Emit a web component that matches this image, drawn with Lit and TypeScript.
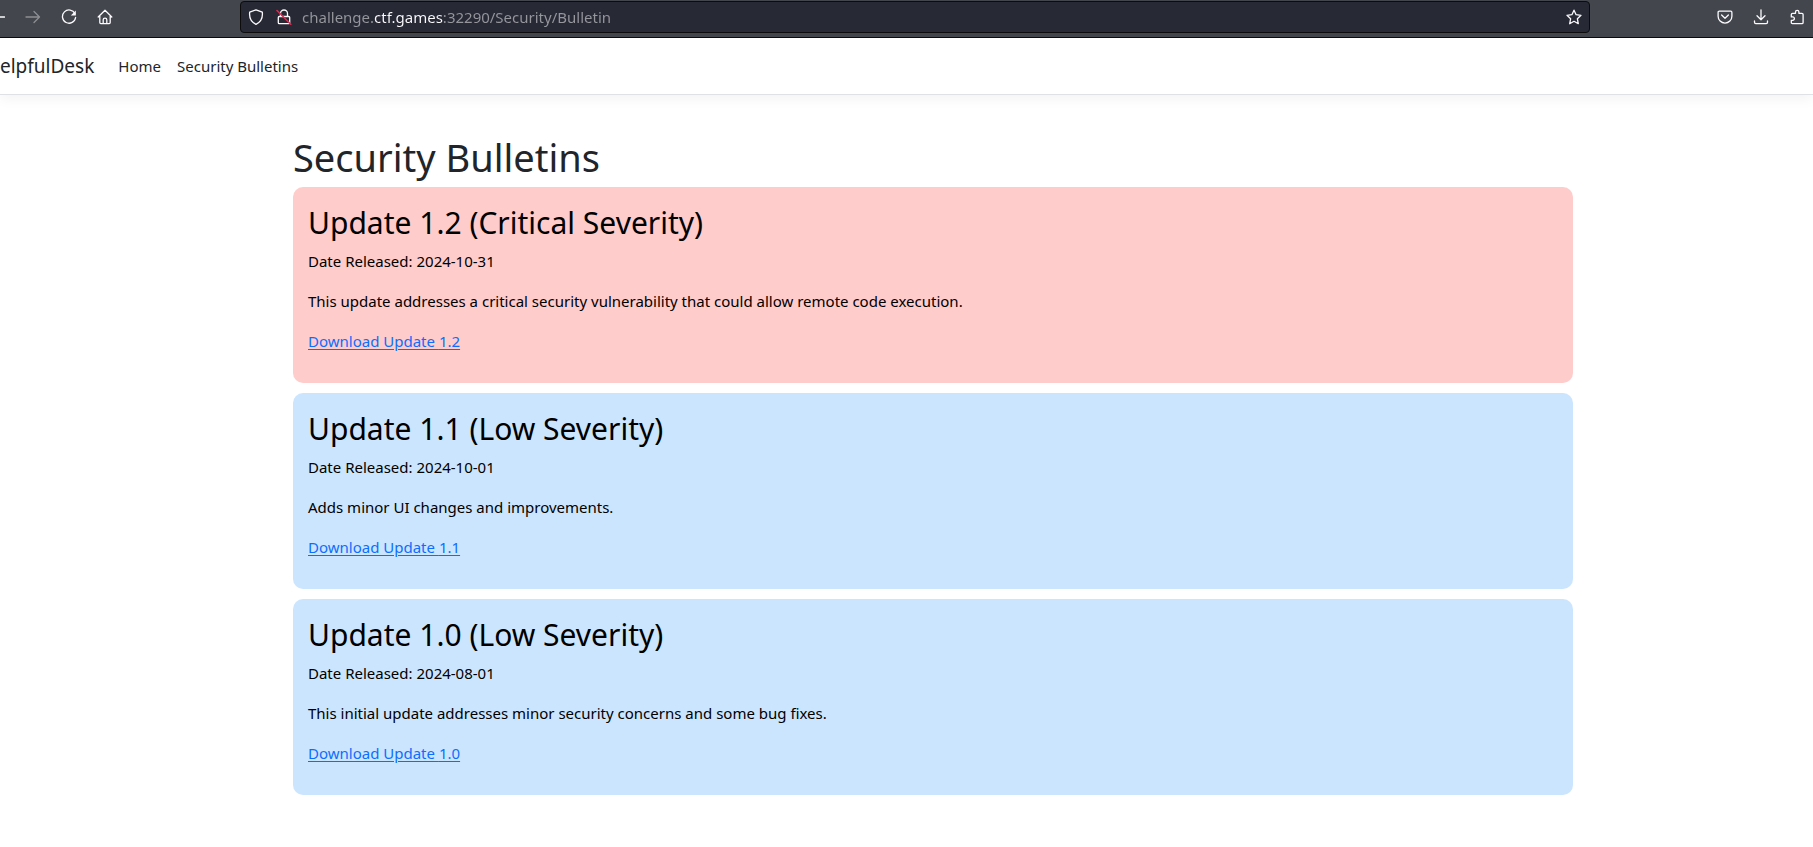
import { LitElement, html, css, svg } from "lit";
import { customElement, property } from "lit/decorators.js";

const icons = {
  back: svg`<path d="M15.5 8H2M7.5 2.5 2 8l5.500 5.500" />`,
  forward: svg`<path d="M1 8h13.500M9 2.500 14.500 8 9 13.500" />`,
  reload: svg`<path d="M14 4.700A6.600 6.600 0 1 0 14.600 8.500" /><path d="M14.800 1.600v5h-5z" fill="currentColor" stroke="none" />`,
  home: svg`<path d="M1.200 8 8 1.300 14.800 8M2.800 7v6.600q0 1 1 1h8.400q1 0 1-1V7M6.200 14.500V10.800q0-1.600 1.800-1.600t1.800 1.600v3.700" />`,
  shield: svg`<path d="M8 .8 14.300 3.200C14.900 8.200 12.800 13 8 15.300 3.200 13 1.100 8.200 1.700 3.200z" />`,
  lock: svg`<path d="M4.500 7.500V4.500a3.500 3.500 0 0 1 7 0v3M3.300 7.500h9.400q1 0 1 1v5.200q0 1-1 1H3.300q-1 0-1-1V8.500q0-1 1-1z" /><path d="M1 1.500 14.800 15.300" stroke="#e22850" stroke-width="1.500" />`,
  star: svg`<path d="m8 1.200 2.100 4.500 4.900.6-3.600 3.500.9 4.900L8 12.300l-4.300 2.400.9-4.900L1 6.300l4.900-.6z" />`,
  pocket: svg`<path d="M2.300 2.200h11.400q1.200 0 1.200 1.200v3.800a6.900 6.900 0 0 1-13.800 0V3.400q0-1.200 1.200-1.200z" /><path d="m4.600 6 3.400 3.200L11.400 6" />`,
  download: svg`<path d="M8 .8v9.700M4 6.700l4 4 4-4M1.500 12v1.300q0 1.300 1.300 1.300h10.400q1.300 0 1.300-1.300V12" />`,
  puzzle: svg`<path d="M2.300 5.500q0-1.200 1.200-1.200h3V3a1.700 1.700 0 0 1 3.400 0v1.300h3q1.200 0 1.200 1.200v8q0 1.200-1.200 1.200H3.500q-1.200 0-1.200-1.200v-2.200h1.400a1.700 1.700 0 0 0 0-3.400H2.300z" />`,
};

const icon = (name: keyof typeof icons) => html`<svg
  width="16" height="16" viewBox="0 0 16 16" fill="none" stroke="currentColor"
  stroke-width="1.300" stroke-linejoin="round" stroke-linecap="round" aria-hidden="true"
>${icons[name]}</svg>`;

@customElement("browser-toolbar")
class BrowserToolbar extends LitElement {
  static styles = css`
    :host {
      display: grid;
      grid-template-columns: 240px minmax(0, 1fr) 223px;
      box-sizing: border-box;
      height: 38px;
      padding: 1px 0 4px;
      overflow: hidden;
      background: #43464d;
      border-bottom: 1px solid #0c0c0d;
      color: #fbfbfe;
    }
    .group { display: flex; align-items: center; }
    .start { margin-left: -21px; }
    .end { justify-content: flex-end; margin-right: -2px; }
    button {
      display: grid;
      place-items: center;
      width: 36px;
      height: 32px;
      padding: 0;
      border: 0;
      background: none;
      color: inherit;
    }
    button:disabled { opacity: 0.4; }
    .address {
      display: flex;
      align-items: center;
      box-sizing: border-box;
      height: 32px;
      background: #272935;
      border: 1px solid #0c0c0d;
      border-radius: 4px;
      padding: 0 1px;
    }
    .address button { width: 28px; }
    .url {
      flex: 1;
      min-width: 0;
      padding: 0;
      margin: 0 0 0 4px;
      height: 30px;
      border: 0;
      outline: 0;
      font: 15px/30px "Noto Sans", sans-serif;
      color: transparent;
      background: linear-gradient(90deg, #96979d 71px, #fbfbfe 71px 141px, #96979d 141px);
      -webkit-background-clip: text;
      background-clip: text;
    }
  `;
  render() {
    return html`
      <div class="group start">
        <button aria-label="Back">${icon("back")}</button>
        <button aria-label="Forward" disabled>${icon("forward")}</button>
        <button aria-label="Reload">${icon("reload")}</button>
        <button aria-label="Home">${icon("home")}</button>
      </div>
      <div class="address">
        <button aria-label="Tracking protection">${icon("shield")}</button>
        <button aria-label="Connection not secure">${icon("lock")}</button>
        <input class="url" aria-label="Address" value="challenge.ctf.games:32290/Security/Bulletin" />
        <button aria-label="Bookmark">${icon("star")}</button>
      </div>
      <div class="group end">
        <button aria-label="Pocket">${icon("pocket")}</button>
        <button aria-label="Downloads">${icon("download")}</button>
        <button aria-label="Extensions">${icon("puzzle")}</button>
      </div>
    `;
  }
}

@customElement("bulletin-card")
class BulletinCard extends LitElement {
  @property() version = "";
  @property() severity = "";
  @property() released = "";
  @property() summary = "";

  static styles = css`
    :host { display: block; }
    .card {
      padding: 17px 15px 14px;
      border-radius: 10px;
      background: #cce5ff;
      color: #000;
    }
    .critical { background: #ffcccc; }
    h2 { margin: 0 0 7px; font-size: 30px; font-weight: 400; line-height: 38px; }
    p { margin: 0 0 16px; }
    a { color: #0d6efd; text-underline-offset: 2px; }
  `;
  render() {
    return html`
      <article class="card ${this.severity.toLowerCase()}">
        <h2>Update ${this.version} (${this.severity} Severity)</h2>
        <p>Date Released: ${this.released}</p>
        <p>${this.summary}</p>
        <p><a href="#update-${this.version}">Download Update ${this.version}</a></p>
      </article>
    `;
  }
}

const bulletins = [
  { version: "1.2", severity: "Critical", released: "2024-10-31", summary: "This update addresses a critical security vulnerability that could allow remote code execution." },
  { version: "1.1", severity: "Low", released: "2024-10-01", summary: "Adds minor UI changes and improvements." },
  { version: "1.0", severity: "Low", released: "2024-08-01", summary: "This initial update addresses minor security concerns and some bug fixes." },
];

@customElement("app-root")
class AppRoot extends LitElement {
  static styles = css`
    :host {
      display: block;
      min-height: 100vh;
      background: #fff;
      color: #212529;
      font: 15px/24px "Noto Sans", sans-serif;
    }
    header {
      display: flex;
      align-items: center;
      padding: 8px 0;
      border-bottom: 1px solid #dee2e6;
      box-shadow: 0 4px 12px rgba(0, 0, 0, 0.05);
    }
    a { color: inherit; text-decoration: none; }
    .brand { margin-right: 16px; font-size: 19px; line-height: 32px; }
    nav { display: flex; }
    nav a { padding: 8px; }
    main { padding: 38px 0 16px 53px; }
    .content { max-width: 1280px; margin: 0 auto; }
    h1 { margin: 0 0 6px; font-size: 38px; font-weight: 400; line-height: 48px; }
    .list { display: grid; gap: 10px; }
  `;
  render() {
    return html`
      <browser-toolbar></browser-toolbar>
      <header>
        <a class="brand" href="#home">elpfulDesk</a>
        <nav>
          <a href="#home">Home</a>
          <a href="#bulletins">Security Bulletins</a>
        </nav>
      </header>
      <main>
        <div class="content">
          <h1>Security Bulletins</h1>
          <div class="list">
            ${bulletins.map((b) => html`<bulletin-card
              .version=${b.version} .severity=${b.severity}
              .released=${b.released} .summary=${b.summary}
            ></bulletin-card>`)}
          </div>
        </div>
      </main>
    `;
  }
}
